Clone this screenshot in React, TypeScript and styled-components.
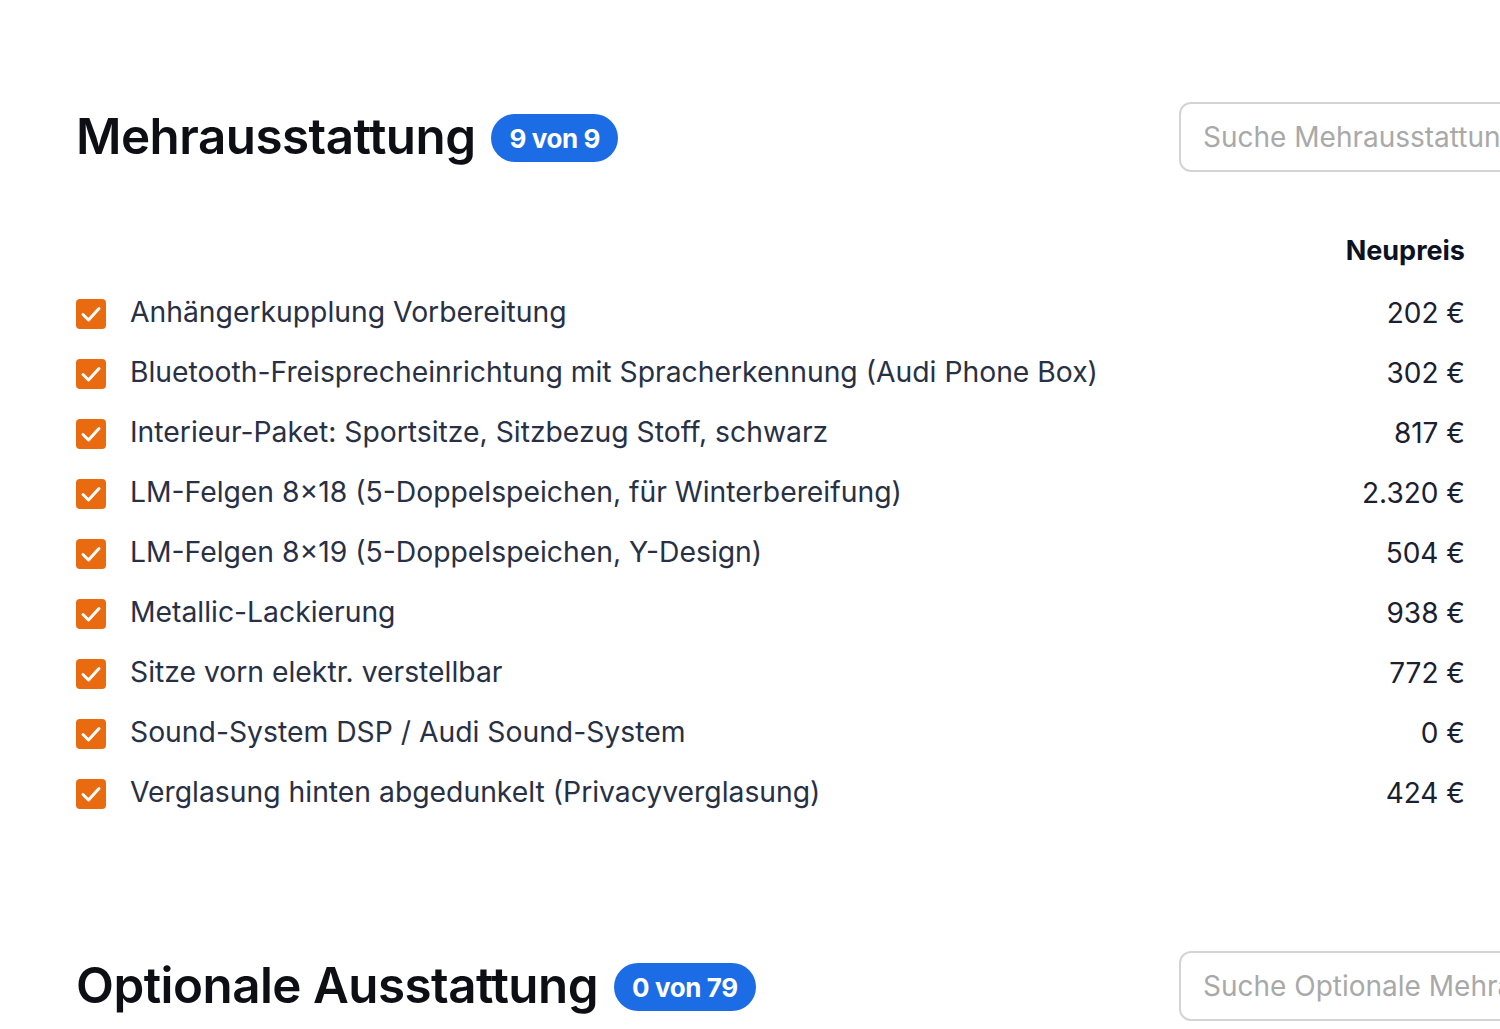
import React from "react";
import styled, { createGlobalStyle } from "styled-components";

const Global = createGlobalStyle`
  html, body { margin: 0; padding: 0; background: #fff; overflow: hidden; }
  body { font-family: Inter, "Noto Sans", "Liberation Sans", sans-serif; }
`;

const Page = styled.div`
  width: 1500px;
  height: 1029px;
  overflow: hidden;
  box-sizing: border-box;
  padding: 102px 35px 0 76px;
`;

const Section = styled.section<{ $gap?: number }>`
  display: flex;
  flex-direction: column;
  margin-bottom: ${(p) => p.$gap ?? 0}px;
`;

const Header = styled.div`
  display: flex;
  align-items: center;
  justify-content: space-between;
  height: 70px;
  margin-right: -114px;
`;

const TitleGroup = styled.div`
  display: flex;
  align-items: center;
  gap: 16px;
`;

const Title = styled.h2`
  margin: 0;
  font-size: 49.3px;
  font-weight: 600;
  color: #0d0f14;
  letter-spacing: -0.5px;
  line-height: 1;
`;

const Badge = styled.span`
  display: inline-flex;
  align-items: center;
  height: 48px;
  padding: 0 18px;
  border-radius: 24px;
  background: #1c6ce6;
  color: #fff;
  font-size: 26px;
  font-weight: 700;
  letter-spacing: -0.4px;
  margin-top: 2px;
`;

const Search = styled.input`
  box-sizing: border-box;
  width: 400px;
  height: 70px;
  border: 2px solid #d4d4d4;
  border-radius: 12px;
  padding: 0 22px;
  font-family: inherit;
  font-size: 28px;
  color: #333;
  background: #fff;
  outline: none;
  &::placeholder { color: #a9a9a9; }
`;

const Table = styled.div`
  display: flex;
  flex-direction: column;
  margin-top: 62px;
`;

const ColHead = styled.div`
  text-align: right;
  font-size: 27px;
  font-weight: 700;
  color: #0d1222;
  line-height: 34px;
  margin-bottom: 15px;
`;

const Row = styled.label`
  display: grid;
  grid-template-columns: 54px 1fr auto;
  align-items: center;
  height: 60px;
`;

const Check = styled.span`
  width: 30px;
  height: 30px;
  border-radius: 4px;
  background: #ea6a10;
  display: flex;
  align-items: center;
  justify-content: center;
  margin-top: 2px;
`;

const Name = styled.span`
  font-size: 28.3px;
  color: #283045;
  line-height: 1;
  margin-top: -2px;
`;

const Price = styled.span`
  font-size: 28px;
  color: #1a2030;
  text-align: right;
  line-height: 1;
`;

const items: [string, string][] = [
  ["Anhängerkupplung Vorbereitung", "202 €"],
  ["Bluetooth-Freisprecheinrichtung mit Spracherkennung (Audi Phone Box)", "302 €"],
  ["Interieur-Paket: Sportsitze, Sitzbezug Stoff, schwarz", "817 €"],
  ["LM-Felgen 8×18 (5-Doppelspeichen, für Winterbereifung)", "2.320 €"],
  ["LM-Felgen 8×19 (5-Doppelspeichen, Y-Design)", "504 €"],
  ["Metallic-Lackierung", "938 €"],
  ["Sitze vorn elektr. verstellbar", "772 €"],
  ["Sound-System DSP / Audi Sound-System", "0 €"],
  ["Verglasung hinten abgedunkelt (Privacyverglasung)", "424 €"],
];

const Tick = () => (
  <svg width="24" height="24" viewBox="0 0 24 24" fill="none">
    <path d="M4 12.5 L9.5 18 L20 6.5" stroke="#fff" strokeWidth="3" strokeLinecap="round" strokeLinejoin="round" />
  </svg>
);

export default function App() {
  return (
    <>
      <Global />
      <Page>
        <Section $gap={128}>
          <Header>
            <TitleGroup>
              <Title>Mehrausstattung</Title>
              <Badge>9 von 9</Badge>
            </TitleGroup>
            <Search placeholder="Suche Mehrausstattung" />
          </Header>
          <Table>
            <ColHead>Neupreis</ColHead>
            {items.map(([n, p]) => (
              <Row key={n}>
                <Check><Tick /></Check>
                <Name>{n}</Name>
                <Price>{p}</Price>
              </Row>
            ))}
          </Table>
        </Section>
        <Section>
          <Header>
            <TitleGroup>
              <Title>Optionale Ausstattung</Title>
              <Badge>0 von 79</Badge>
            </TitleGroup>
            <Search placeholder="Suche Optionale Mehrausstattung" />
          </Header>
        </Section>
      </Page>
    </>
  );
}
